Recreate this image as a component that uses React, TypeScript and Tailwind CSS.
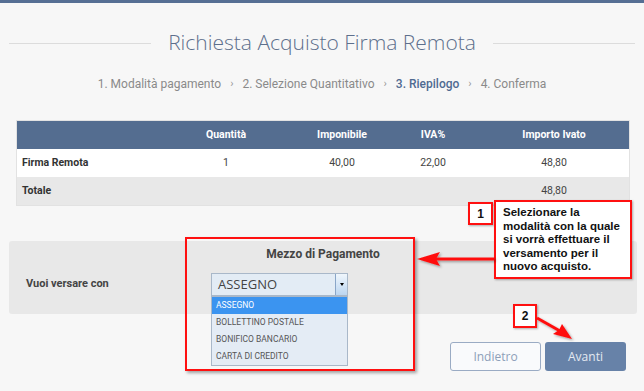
import React from "react";

const steps = [
  { label: "1. Modalità pagamento", active: false },
  { label: "2. Selezione Quantitativo", active: false },
  { label: "3. Riepilogo", active: true },
  { label: "4. Conferma", active: false },
];

const options = ["ASSEGNO", "BOLLETTINO POSTALE", "BONIFICO BANCARIO", "CARTA DI CREDITO"];

const cols = "grid grid-cols-[140px_138px_94px_88px_154px]";

export default function App() {
  return (
    <div className="relative w-[644px] h-[391px] overflow-hidden bg-[#f7f7f7] font-['Open_Sans',sans-serif]">
      <div className="h-[3px] bg-[#566f94]" />

      {/* title */}
      <div className="mt-[25px] flex h-[30px] items-center px-[9px]">
        <div className="h-px flex-1 bg-[#dcdcdc]" />
        <h1 className="px-[17px] text-[21px] font-light text-[#5d6f8c]">Richiesta Acquisto Firma Remota</h1>
        <div className="h-px flex-1 bg-[#dcdcdc]" />
      </div>

      {/* steps */}
      <div className="mt-[18px] flex h-[16px] items-center justify-center gap-[9px] font-['Roboto',sans-serif] text-[12px] text-[#8a8a8a]">
        {steps.map((s, i) => (
          <React.Fragment key={s.label}>
            <span className={s.active ? "font-medium text-[#4f6a91]" : ""}>{s.label}</span>
            {i < steps.length - 1 && <span className="text-[11px] text-[#999]">›</span>}
          </React.Fragment>
        ))}
      </div>

      {/* table */}
      <div className="mx-[16px] mt-[28px] w-[614px] border border-[#e2e2e2] font-['Roboto',sans-serif] text-[10.5px]">
        <div className={`${cols} h-[28px] items-center bg-[#546d90] font-bold text-white`}>
          <span />
          <span className="text-center">Quantità</span>
          <span className="text-center">Imponibile</span>
          <span className="text-center">IVA%</span>
          <span className="text-center">Importo Ivato</span>
        </div>
        <div className={`${cols} h-[28px] items-center bg-white text-[#444]`}>
          <span className="pl-[5px] font-bold text-[#333]">Firma Remota</span>
          <span className="text-center">1</span>
          <span className="text-center">40,00</span>
          <span className="text-center">22,00</span>
          <span className="text-center">48,80</span>
        </div>
        <div className={`${cols} h-[28px] items-center bg-[#e8e8e8] text-[#444]`}>
          <span className="pl-[5px] font-bold text-[#333]">Totale</span>
          <span />
          <span />
          <span />
          <span className="text-center">48,80</span>
        </div>
      </div>

      {/* payment panel */}
      <div className="ml-[9px] mt-[35px] h-[73px] w-[628px] rounded-[3px] bg-[#e8e8e8] font-['Roboto',sans-serif]">
        <div className="pt-[5px] text-center text-[12px] font-bold leading-[16px] text-[#444]">Mezzo di Pagamento</div>
        <div className="mt-[11px] flex items-center">
          <span className="w-[202px] pl-[17px] text-[11px] font-bold text-[#444]">Vuoi versare con</span>
          <div className="relative flex h-[23px] w-[137px] items-center border border-[#a9b8c9] bg-[#e3ecf5]">
            <span className="flex-1 pl-[6px] font-['Open_Sans',sans-serif] text-[13px] text-[#444]">ASSEGNO</span>
            <span className="flex h-full w-[12px] items-center justify-center border-l border-[#8aa6c8] bg-gradient-to-b from-[#f0f6fc] to-[#bcd6f0]">
              <span className="h-0 w-0 border-x-[2.5px] border-t-[3px] border-x-transparent border-t-black" />
            </span>
            <ul className="absolute left-[-1px] top-[22px] w-[137px] border border-[#a9b8c9] bg-[#e4ecf5] text-[8.5px] text-[#555]">
              {options.map((o, i) => (
                <li
                  key={o}
                  className={`flex h-[17px] items-center pl-[4px] ${i === 0 ? "bg-[#3b94f0] text-white" : ""}`}
                >
                  {o}
                </li>
              ))}
            </ul>
          </div>
        </div>
      </div>

      {/* buttons */}
      <div className="mt-[28px] flex justify-end gap-[4px] pr-[18px] font-['Open_Sans',sans-serif] text-[12px]">
        <button className="h-[29px] w-[91px] rounded-[3px] border border-[#9aabc4] bg-[#f9fafc] text-[#8d9fb9]">Indietro</button>
        <button className="h-[29px] w-[81px] rounded-[3px] bg-[#6782a8] text-[#e4e9f1]">Avanti</button>
      </div>

      {/* annotations */}
      <div className="absolute left-[185px] top-[237px] h-[134px] w-[230px] border-[2.5px] border-[#ff1010] shadow-[2px_2px_3px_rgba(0,0,0,0.35)]" />

      <div className="absolute left-[468px] top-[202px] flex h-[23px] w-[25px] items-center justify-center border-2 border-[#ff1010] bg-white font-['Liberation_Sans',sans-serif] text-[12px] font-bold text-[#111] shadow-[1px_1px_2px_rgba(0,0,0,0.3)]">
        1
      </div>
      <div className="absolute left-[494px] top-[200px] h-[79px] w-[138px] border-2 border-[#ff1010] bg-white pl-[7px] pt-[4px] font-['Liberation_Sans',sans-serif] text-[11.5px] font-bold leading-[13.6px] text-[#111] shadow-[1px_1px_2px_rgba(0,0,0,0.3)]">
        Selezionare la
        <br />
        modalità con la quale
        <br />
        si vorrà effettuare il
        <br />
        versamento per il
        <br />
        nuovo acquisto.
      </div>

      <div className="absolute left-[513px] top-[304px] flex h-[24px] w-[24px] items-center justify-center border-2 border-[#ff1010] bg-white font-['Liberation_Sans',sans-serif] text-[12px] font-bold text-[#111] shadow-[1px_1px_2px_rgba(0,0,0,0.3)]">
        2
      </div>

      <svg className="pointer-events-none absolute left-0 top-0" width="644" height="391" viewBox="0 0 644 391">
        <defs>
          <filter id="sh" x="-10%" y="-50%" width="130%" height="200%">
            <feDropShadow dx="1.5" dy="1.5" stdDeviation="1" floodColor="#000" floodOpacity="0.35" />
          </filter>
        </defs>
        <g filter="url(#sh)" fill="#ff1010" stroke="#ff1010">
          <line x1="494" y1="259" x2="432" y2="259" strokeWidth="3" />
          <polygon points="417,259 440,252 436,259 440,266" stroke="none" />
          <line x1="537" y1="318" x2="560" y2="331" strokeWidth="3" />
          <polygon points="572,339 553,334 559,330 562,324" stroke="none" />
        </g>
      </svg>
    </div>
  );
}
